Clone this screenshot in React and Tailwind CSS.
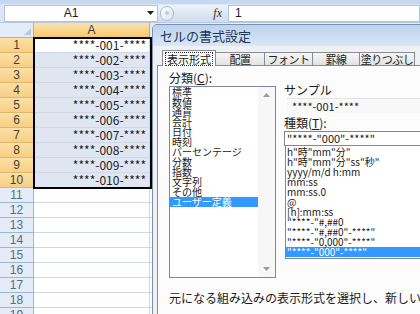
import React from 'react';

const categories = ['標準', '数値', '通貨', '会計', '日付', '時刻', 'パーセンテージ', '分数', '指数', '文字列', 'その他', 'ユーザー定義'];

const formats = [
    'h"時"mm"分"',
    'h"時"mm"分"ss"秒"',
    'yyyy/m/d h:mm',
    'mm:ss',
    'mm:ss.0',
    '@',
    '[h]:mm:ss',
    '"****-"#,##0',
    '"****-"#,##0"-****"',
    '"****-"0,000"-****"',
    '"****-"000"-****"',
];

const rows = Array.from({ length: 19 }, (_, i) => i + 1);

function FormulaBar() {
    return (
        <div className="h-[19px] flex items-center bg-[#dbe6f4] border-b border-[#b6c9e0]">
            <div className="ml-[4px] w-[154px] h-[17px] bg-white border border-[#b1c5dd] flex items-center">
                <span className="flex-1 text-center text-[12px] leading-none pr-[10px] font-['Liberation_Sans',sans-serif]">A1</span>
                <svg width="7" height="4" viewBox="0 0 7 4" className="mr-[3px]">
                    <polygon points="0,0 7,0 3.5,4" fill="#222" />
                </svg>
            </div>
            {/* faded cancel/enter button and fx */}
            <div className="w-[70px] h-[17px] flex items-center bg-gradient-to-b from-[#eef3fa] to-[#cfdcee]">
                <div className="ml-[2px] w-[14px] h-[15px] rounded-full border border-[#a9bcd5] bg-gradient-to-br from-white to-[#d7e2f0] flex items-center justify-center">
                    <div className="w-[4px] h-[4px] rounded-full bg-[#c2cddc]" />
                </div>
                <span className="ml-auto mr-[6px] text-[12px] italic font-['Liberation_Serif',serif] text-[#333]">fx</span>
            </div>
            <div className="flex-1 h-[17px] bg-white border border-[#b1c5dd] flex items-center pl-[6px] text-[12px] font-['Liberation_Sans',sans-serif]">
                1
            </div>
        </div>
    );
}

function Sheet() {
    return (
        <div className="relative">
            <div className="flex h-[15px]">
                <div className="w-[34px] bg-[#e4ecf7] border-r border-b border-[#9eb6ce] flex items-end justify-end p-[2px]">
                    <svg width="7" height="7" viewBox="0 0 7 7">
                        <polygon points="7,0 7,7 0,7" fill="#b8c9de" />
                    </svg>
                </div>
                <div className="w-[116px] bg-gradient-to-b from-[#fbe3ae] to-[#f6c86c] border-r border-b border-[#e2a74a] flex items-center justify-center text-[12px] text-[#3b3b3b] font-['Liberation_Sans',sans-serif]">
                    A
                </div>
                <div className="flex-1 bg-[#e4ecf7] border-b border-[#9eb6ce]" />
            </div>
            {rows.map((n) => {
                const selected = n <= 10;
                return (
                    <div key={n} className="flex h-[15px]">
                        <div
                            className={
                                selected
                                    ? 'w-[34px] bg-gradient-to-b from-[#fbe0a6] to-[#f7cf85] border-r border-b border-[#e3b56a] flex items-center justify-center text-[12px] text-[#4a4030] font-[\'Liberation_Sans\',sans-serif]'
                                    : 'w-[34px] bg-[#e4ecf7] border-r border-b border-[#9eb6ce] flex items-center justify-center text-[12px] text-[#5c6b80] font-[\'Liberation_Sans\',sans-serif]'
                            }
                        >
                            {n}
                        </div>
                        <div
                            className={
                                (n === 1 ? 'bg-white' : selected ? 'bg-[#dfe6f2]' : 'bg-white') +
                                ' w-[116px] border-r border-b border-[#d0d7e5] flex items-center justify-end pr-[3px] text-[12px] text-[#222] font-[\'DejaVu_Sans_Mono\',monospace]'
                            }
                        >
                            {selected ? `****-${String(n).padStart(3, '0')}-****` : ''}
                        </div>
                        <div className="flex-1 bg-white border-b border-[#d0d7e5]" />
                    </div>
                );
            })}
            {/* thick selection border */}
            <div className="absolute left-[33px] top-[14px] w-[119px] h-[152px] border-2 border-black pointer-events-none" />
        </div>
    );
}

function Arrow({ up }) {
    return (
        <div className="h-[16px] flex items-center justify-center">
            <svg width="7" height="4" viewBox="0 0 7 4">
                <polygon points={up ? '0,4 7,4 3.5,0' : '0,0 7,0 3.5,4'} fill="#9a9a9a" />
            </svg>
        </div>
    );
}

function FormatDialog() {
    const tabs = ['配置', 'フォント', '罫線', '塗りつぶし'];
    const widths = ['w-[49px]', 'w-[48px]', 'w-[47px]', 'w-[55px]'];
    return (
        <div className="absolute left-[152px] top-[24px] w-[290px] h-[300px] bg-[#eef0f3] border border-[#7a93b3] rounded-tl-[5px] overflow-hidden">
            <div className="h-[21px] bg-gradient-to-b from-[#bcd2ec] to-[#d9e6f5] flex items-center pl-[7px] text-[13px] text-[#1c365a]">
                セルの書式設定
            </div>
            <div className="pl-[4px]">
                <div className="flex items-end h-[15px] mt-[4px] pl-[5px] text-[11px]">
                    <div className="relative z-10 -mb-px w-[54px] h-[16px] bg-[#fcfcfc] border border-b-0 border-[#898c95] flex items-center justify-center whitespace-nowrap">
                        <span className="border border-dotted border-[#333] px-[1px] leading-[12px]">表示形式</span>
                    </div>
                    {tabs.map((t, i) => (
                        <div key={t} className={widths[i] + ' h-[13px] bg-gradient-to-b from-[#f6f6f6] to-[#e2e2e2] border-t border-r border-[#898c95] flex items-center justify-center leading-none text-[#222] whitespace-nowrap tracking-[-0.5px]'}>
                            {t}
                        </div>
                    ))}
                </div>
                <div className="w-[300px] h-[260px] bg-[#fcfcfc] border border-[#898c95] pl-[11px] pt-[5px]">
                    <div className="flex gap-[8px]">
                        <div className="w-[107px]">
                            <div className="h-[14px] leading-[14px] text-[12px]">分類(<span className="underline">C</span>):</div>
                            <div className="mt-[1px] h-[192px] bg-white border border-[#828790] flex">
                                <div className="flex-1 text-[10px] leading-[10px]">
                                    {categories.map((c) => (
                                        <div
                                            key={c}
                                            className={
                                                c === 'ユーザー定義'
                                                    ? 'h-[10px] pl-[2px] bg-[#3399ff] text-white whitespace-nowrap'
                                                    : 'h-[10px] pl-[2px] whitespace-nowrap'
                                            }
                                        >
                                            {c}
                                        </div>
                                    ))}
                                </div>
                                <div className="w-[17px] bg-[#f7f7f7] flex flex-col justify-between">
                                    <Arrow up />
                                    <Arrow />
                                </div>
                            </div>
                        </div>
                        <div className="w-[150px]">
                            <div className="mt-[12px] h-[14px] leading-[14px] text-[12px]">サンプル</div>
                            <div className="mt-[1px] ml-[3px] h-[15px] bg-[#f8f8f8] border-t border-[#e3e3e3] flex items-center pl-[5px] text-[11px] leading-none">
                                ****-001-****
                            </div>
                            <div className="mt-[3px] h-[14px] leading-[14px] text-[12px]">種類(<span className="underline">T</span>):</div>
                            <div className="mt-[1px] h-[15px] bg-white border border-[#828790] flex items-center pl-[2px] text-[11px] leading-none whitespace-nowrap">
                                "****-"000"-****"
                            </div>
                            <div className="ml-[1px] h-[113px] bg-white border border-t-0 border-[#828790] pt-px text-[10px] leading-[10px]">
                                {formats.map((f, i) => (
                                    <div
                                        key={f}
                                        className={
                                            i === formats.length - 1
                                                ? 'h-[10px] pl-[1px] bg-[#3399ff] text-white whitespace-nowrap'
                                                : 'h-[10px] pl-[1px] whitespace-nowrap'
                                        }
                                    >
                                        {f}
                                    </div>
                                ))}
                            </div>
                        </div>
                    </div>
                    <div className="mt-[13px] h-[14px] leading-[14px] text-[12px] whitespace-nowrap">
                        元になる組み込みの表示形式を選択し、新しい表示形式を入力してください。
                    </div>
                </div>
            </div>
        </div>
    );
}

export default function App() {
    return (
        <div className="relative w-[420px] h-[314px] overflow-hidden bg-white font-['Noto_Sans_CJK_JP',sans-serif] text-[#1a1a1a]">
            <div className="h-[4px] bg-[#c5d8ef]" />
            <FormulaBar />
            <Sheet />
            <FormatDialog />
        </div>
    );
}
